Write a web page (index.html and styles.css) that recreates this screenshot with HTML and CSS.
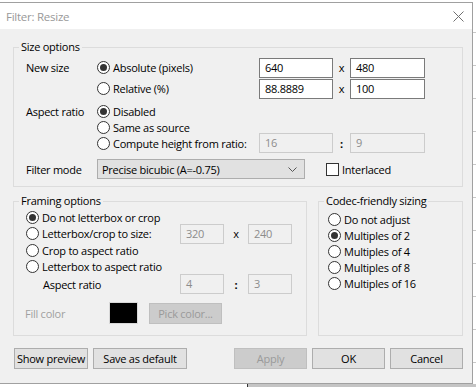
FILE: index.html
```html
<!DOCTYPE html>
<html lang="en">
<head>
    <meta charset="UTF-8">
    <title>Filter: Resize</title>
    <link rel="stylesheet" href="styles.css">
</head>
<body>
    <div class="screen">
        <div class="top">
            <div class="dialog">
                <div class="titlebar">
                    <span>Filter: Resize</span>
                    <svg class="close" width="11" height="11" viewBox="0 0 11 11"><path d="M0.5 0.5L10.5 10.5M10.5 0.5L0.5 10.5" stroke="#707070" stroke-width="1" fill="none"/></svg>
                </div>
                <div class="client">
                    <fieldset class="group">
                        <legend>Size options</legend>
                        <div class="inner size">
                            <div class="row tall">
                                <span class="lbl">New size</span>
                                <span class="radio opt"><span class="dot on"></span>Absolute (pixels)</span>
                                <span class="field">640</span><span class="sep">x</span><span class="field wide">480</span>
                            </div>
                            <div class="row tall">
                                <span class="lbl"></span>
                                <span class="radio opt"><span class="dot"></span>Relative (%)</span>
                                <span class="field">88.8889</span><span class="sep">x</span><span class="field wide">100</span>
                            </div>
                            <div class="row gap4">
                                <span class="lbl">Aspect ratio</span>
                                <span class="radio"><span class="dot on"></span>Disabled</span>
                            </div>
                            <div class="row">
                                <span class="lbl"></span>
                                <span class="radio"><span class="dot"></span>Same as source</span>
                            </div>
                            <div class="row">
                                <span class="lbl"></span>
                                <span class="radio opt"><span class="dot"></span>Compute height from ratio:</span>
                                <span class="field off">16</span><span class="sep colon">:</span><span class="field wide off">9</span>
                            </div>
                            <div class="row combo-row">
                                <span class="lbl">Filter mode</span>
                                <span class="combo">Precise bicubic (A=-0.75)
                                    <svg width="9" height="5" viewBox="0 0 9 5"><path d="M0.5 0.5L4.5 4.5L8.5 0.5" stroke="#555" fill="none"/></svg>
                                </span>
                                <span class="check"></span><span>Interlaced</span>
                            </div>
                        </div>
                    </fieldset>

                    <div class="pair">
                        <fieldset class="group framing">
                            <legend>Framing options</legend>
                            <div class="inner frame">
                                <div class="row"><span class="radio"><span class="dot on"></span>Do not letterbox or crop</span></div>
                                <div class="row r17">
                                    <span class="radio fopt"><span class="dot"></span>Letterbox/crop to size:</span>
                                    <span class="field small off">320</span><span class="sep mid">x</span><span class="field small off">240</span>
                                </div>
                                <div class="row"><span class="radio"><span class="dot"></span>Crop to aspect ratio</span></div>
                                <div class="row"><span class="radio"><span class="dot"></span>Letterbox to aspect ratio</span></div>
                                <div class="row aspect">
                                    <span class="sublbl">Aspect ratio</span>
                                    <span class="field small off">4</span><span class="sep mid colon">:</span><span class="field small off">3</span>
                                </div>
                                <div class="row fill">
                                    <span class="fill-lbl">Fill color</span>
                                    <span class="swatch"></span>
                                    <span class="btn off pick">Pick color...</span>
                                </div>
                            </div>
                        </fieldset>
                        <fieldset class="group codec">
                            <legend>Codec-friendly sizing</legend>
                            <div class="inner sizing">
                                <div class="row"><span class="radio"><span class="dot"></span>Do not adjust</span></div>
                                <div class="row"><span class="radio"><span class="dot on"></span>Multiples of 2</span></div>
                                <div class="row"><span class="radio"><span class="dot"></span>Multiples of 4</span></div>
                                <div class="row"><span class="radio"><span class="dot"></span>Multiples of 8</span></div>
                                <div class="row"><span class="radio"><span class="dot"></span>Multiples of 16</span></div>
                            </div>
                        </fieldset>
                    </div>

                    <div class="buttons">
                        <span class="btn w74">Show preview</span>
                        <span class="btn w94">Save as default</span>
                        <span class="btn off push">Apply</span>
                        <span class="btn">OK</span>
                        <span class="btn">Cancel</span>
                    </div>
                </div>
            </div>
            <div class="backdrop"></div>
        </div>
        <div class="under"><span class="under-left"></span><span class="under-right"></span></div>
    </div>
</body>
</html>
```

FILE: styles.css
```css
* { box-sizing: border-box; }
body { margin: 0; font-family: "Open Sans", Lato, sans-serif; font-size: 11px; letter-spacing: -0.25px; color: #000; background: #fff; }
.screen { width: 476px; height: 387px; overflow: hidden; display: flex; flex-direction: column; }
.top { display: flex; height: 384px; }
.dialog { width: 473px; margin-top: 2px; background: #f0f0f0; border-top: 1px solid #a0a0a0; border-right: 1px solid #a0a0a0; border-bottom: 1px solid #a0a0a0; display: flex; flex-direction: column; }
.titlebar { height: 26px; background: #fff; color: #999; font-size: 11.5px; display: flex; align-items: center; justify-content: space-between; padding: 0 8px 0 6px; }
.client { flex: 1; padding: 10px 9px 0 13px; }

.group { border: 1px solid #dcdcdc; margin: 0; padding: 0; min-width: 0; }
.group legend { margin-left: 5px; padding: 0 2px; line-height: 16px; }
.inner.size { padding: 2px 0 7px 12px; }
.inner.frame { padding: 0 0 11px 12px; }
.inner.sizing { padding: 2px 0 0 9px; }

.row { display: flex; align-items: center; height: 16px; white-space: nowrap; }
.row.tall { height: 21px; }
.row.gap4 { margin-top: 4px; }
.row.r17 { height: 17px; }
.combo-row { height: 20px; margin-top: 8px; }
.lbl { width: 71px; }
.opt { width: 162px; }
.radio { display: flex; align-items: center; }
.dot { width: 13px; height: 13px; border: 1px solid #333; border-radius: 50%; background: #fff; margin-right: 3px; display: flex; align-items: center; justify-content: center; flex: none; }
.dot.on::after { content: ''; width: 7px; height: 7px; border-radius: 50%; background: #333; }

.field { width: 74px; height: 20px; border: 1px solid #7a7a7a; background: #fff; padding: 0 5px; line-height: 18px; flex: none; }
.field.wide { width: 75px; }
.field.small { width: 44px; }
.field.off { border-color: #ccc; background: #f0f0f0; color: #8c8c8c; }
.sep { width: 17px; text-align: center; }
.sep.mid { width: 24px; }
.colon { font-weight: bold; }

.combo { width: 208px; height: 20px; border: 1px solid #adadad; background: #e1e1e1; display: flex; align-items: center; justify-content: space-between; padding: 0 4px; margin-right: 21px; }
.combo svg { margin-right: 3px; }
.check { width: 13px; height: 13px; border: 1px solid #333; background: #fff; margin-right: 3px; }

.pair { display: flex; gap: 11px; margin-top: 6px; }
.framing { width: 294px; }
.codec { flex: 1; }
.fopt { width: 154px; }
.aspect { height: 20px; }
.sublbl { width: 154px; padding-left: 17px; }
.fill { height: 22px; margin-top: 8px; margin-left: -1px; }
.fill-lbl { width: 84px; color: #a0a0a0; }
.swatch { width: 29px; height: 22px; background: #000; border: 1px solid #d8d8d8; }
.pick { width: 84px; margin-left: 11px; }

.btn { height: 21px; width: 73px; border: 1px solid #adadad; background: #e1e1e1; display: flex; align-items: center; justify-content: center; white-space: nowrap; flex: none; }
.btn.off { background: #ccc; border-color: #bfbfbf; color: #9a9a9a; }
.btn.w74 { width: 74px; }
.btn.w94 { width: 94px; }
.btn.push { margin-left: auto; }
.buttons { display: flex; gap: 5px; margin-top: 12px; padding-left: 1px; }

.backdrop { flex: 1; background: repeating-linear-gradient(#fff 0 32px, #c8c8c8 32px 33px); }
.under { display: flex; height: 3px; }
.under-left { width: 248px; background: #fff; border-right: 1px solid #333; }
.under-right { flex: 1; background: #c4c4c4; }
```
